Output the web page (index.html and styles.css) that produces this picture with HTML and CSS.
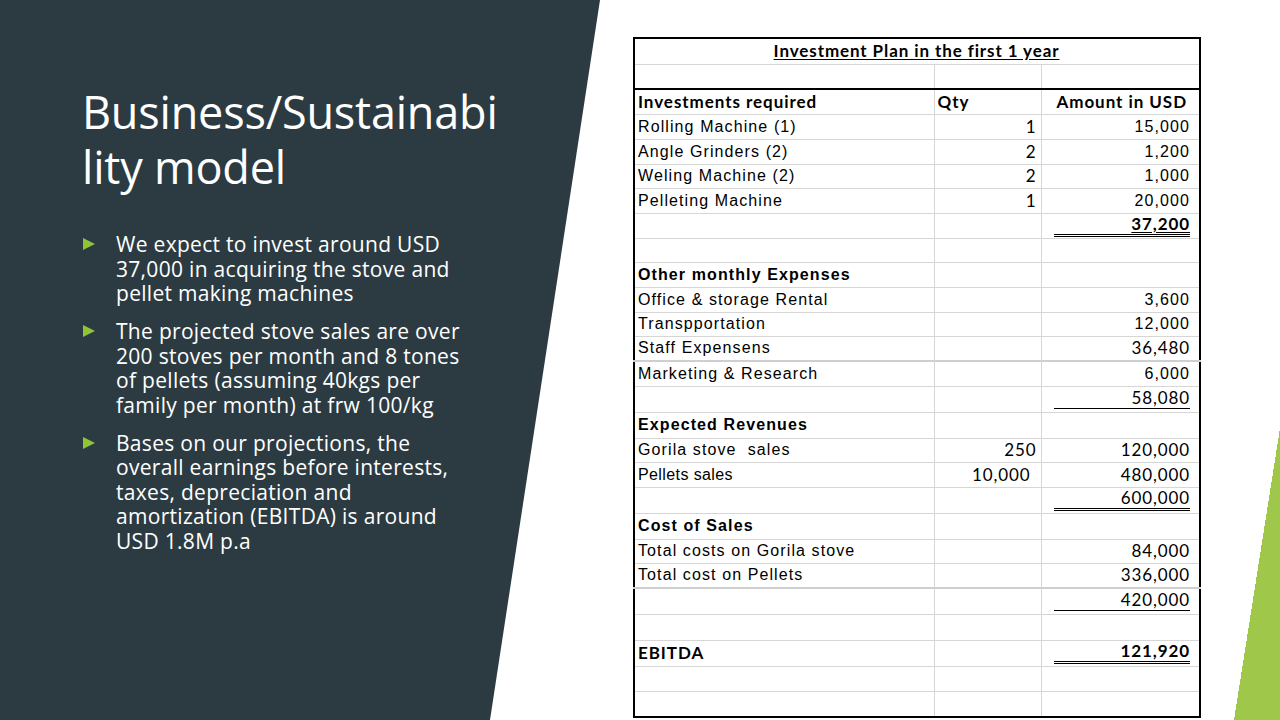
FILE: index.html
```html
<!DOCTYPE html>
<html lang="en">
<head>
<meta charset="utf-8">
<title>Business/Sustainability model</title>
<link rel="stylesheet" href="styles.css">
</head>
<body>
<div class="slide">
  <section class="panel">
    <h1 class="title">Business/Sustainabi<br>lity model</h1>
    <ul class="bullets">
      <li>We expect to invest around USD<br>37,000 in acquiring the stove and<br>pellet making machines</li>
      <li>The projected stove sales are over<br>200 stoves per month and 8 tones<br>of pellets (assuming 40kgs per<br>family per month) at frw 100/kg</li>
      <li>Bases on our projections, the<br>overall earnings before interests,<br>taxes, depreciation and<br>amortization (EBITDA) is around<br>USD 1.8M p.a</li>
    </ul>
  </section>
  <section class="sheet">
    <table class="plan">
      <colgroup><col class="col-a"><col class="col-b"><col class="col-c"></colgroup>
      <tr class="r26"><td colspan="3" class="caption"><span>Investment Plan in the first 1 year</span></td></tr>
      <tr><td></td><td></td><td></td></tr>
      <tr class="head"><td class="c b">Investments required</td><td class="c b">Qty</td><td class="c b num">Amount in USD</td></tr>
      <tr><td>Rolling Machine (1)</td><td class="c num">1</td><td class="num">15,000</td></tr>
      <tr><td>Angle Grinders (2)</td><td class="c num">2</td><td class="num">1,200</td></tr>
      <tr class="r24"><td>Weling Machine (2)</td><td class="c num">2</td><td class="num">1,000</td></tr>
      <tr><td>Pelleting Machine</td><td class="c num">1</td><td class="num">20,000</td></tr>
      <tr><td></td><td></td><td class="num"><span class="total dbl c b ul">37,200</span></td></tr>
      <tr class="r24"><td></td><td></td><td></td></tr>
      <tr><td class="b">Other monthly Expenses</td><td></td><td></td></tr>
      <tr><td>Office &amp; storage Rental</td><td></td><td class="num">3,600</td></tr>
      <tr class="r24"><td>Transpportation</td><td></td><td class="num">12,000</td></tr>
      <tr class="thick"><td>Staff Expensens</td><td></td><td class="num c">36,480</td></tr>
      <tr><td>Marketing &amp; Research</td><td></td><td class="num">6,000</td></tr>
      <tr class="r26"><td></td><td></td><td class="num"><span class="total sgl c">58,080</span></td></tr>
      <tr class="r26"><td class="b">Expected Revenues</td><td></td><td></td></tr>
      <tr class="r24"><td class="pre">Gorila stove  sales</td><td class="num c">250</td><td class="num c">120,000</td></tr>
      <tr><td class="tight">Pellets sales</td><td class="num c indent">10,000</td><td class="num c">480,000</td></tr>
      <tr class="r26"><td></td><td></td><td class="num"><span class="total dbl c">600,000</span></td></tr>
      <tr class="r26"><td class="b">Cost of Sales</td><td></td><td></td></tr>
      <tr class="r24"><td>Total costs on Gorila stove</td><td></td><td class="num c">84,000</td></tr>
      <tr class="thick"><td>Total cost on Pellets</td><td></td><td class="num c">336,000</td></tr>
      <tr class="r26"><td></td><td></td><td class="num"><span class="total sgl c">420,000</span></td></tr>
      <tr class="r26"><td></td><td></td><td></td></tr>
      <tr class="r26"><td class="c b">EBITDA</td><td></td><td class="num"><span class="total dbl c b">121,920</span></td></tr>
      <tr><td></td><td></td><td></td></tr>
      <tr class="r26"><td></td><td></td><td></td></tr>
    </table>
  </section>
</div>
</body>
</html>
```

FILE: styles.css
```css
* { box-sizing: border-box; }

html, body {
  margin: 0;
  padding: 0;
  background: #fff;
}

.slide {
  width: 1280px;
  height: 720px;
  display: flex;
  overflow: hidden;
  background:
    linear-gradient(to bottom right, transparent 50%, #9fc84a 50%) right bottom / 46px 292px no-repeat,
    #fff;
}

/* left dark panel */
.panel {
  flex: 0 0 600px;
  height: 720px;
  background: #2c3b42;
  clip-path: polygon(0 0, 600px 0, 490px 720px, 0 720px);
  color: #fff;
  padding: 84px 0 0 82px;
  font-family: "Open Sans", "DejaVu Sans", sans-serif;
}

.title {
  margin: 0;
  font-weight: 400;
  font-size: 45px;
  line-height: 55px;
  letter-spacing: -0.2px;
}

.bullets {
  list-style: none;
  margin: 38px 0 0;
  padding: 0;
}

.bullets li {
  position: relative;
  padding-left: 34px;
  font-size: 21px;
  line-height: 24.5px;
  margin-bottom: 13.5px;
  letter-spacing: 0.3px;
}

.bullets li::before {
  content: "";
  position: absolute;
  left: 1px;
  top: 6px;
  border-left: 12px solid #8fc33a;
  border-top: 6.5px solid transparent;
  border-bottom: 6.5px solid transparent;
}

/* right spreadsheet */
.sheet {
  flex: 1;
  padding: 37px 0 0 33px;
}

.plan {
  width: 566px;
  border-collapse: collapse;
  border: 2px solid #000;
  table-layout: fixed;
  font-family: "Liberation Sans", Arial, sans-serif;
  font-size: 16px;
  letter-spacing: 1.1px;
  color: #000;
}

.col-a { width: 300px; }
.col-b { width: 107px; }
.col-c { width: 159px; }

.plan tr { height: 25px; }
.plan tr.r24 { height: 24px; }
.plan tr.r26 { height: 26px; }

.plan td {
  border: 1px solid #d6d6d6;
  padding: 0 4px 0 3px;
  white-space: nowrap;
  vertical-align: middle;
  line-height: 18px;
}

.plan tr.thick td { border-bottom: 2px solid #cfcfcf; }

.plan .caption {
  text-align: center;
  font-family: Lato, "Liberation Sans", sans-serif;
  font-weight: 700;
  letter-spacing: 0.9px;
  font-size: 17px;
}

.plan .caption span {
  text-decoration: underline;
  text-underline-offset: 2px;
}

.plan tr.head td { border-top: 2px solid #000; }

.plan .c {
  font-family: Lato, "Liberation Sans", sans-serif;
  font-size: 17px;
  letter-spacing: 0.9px;
}

.plan .b { font-weight: 700; }
.plan td.c.b { letter-spacing: 0.95px; }

.plan .num { text-align: right; }
.plan td:nth-child(3) { padding-right: 9px; }
.plan tr.head td:nth-child(3) { padding-right: 12px; }
.plan td.indent { padding-right: 10px; }
.plan .pre { white-space: pre; }
.plan .tight { letter-spacing: 0.4px; }

.total {
  display: block;
  margin-left: 9px;
  padding-bottom: 1px;
}

.total.sgl { border-bottom: 1px solid #000; }
.total.dbl { border-bottom: 3px double #000; }
.total.ul {
  text-decoration: underline;
  text-underline-offset: 2px;
}
```
